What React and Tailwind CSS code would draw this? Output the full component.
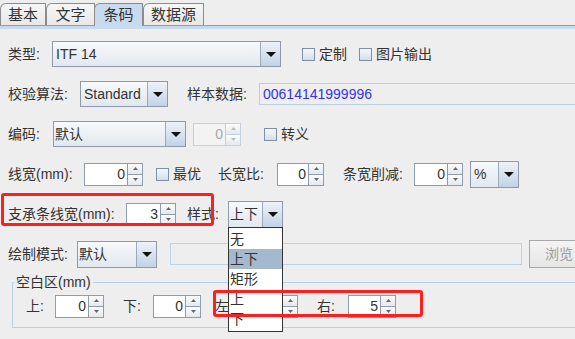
import React from "react";

const tabs = ["基本", "文字", "条码", "数据源"];
const styles = ["无", "上下", "矩形", "上", "下"];

function DownArrow() {
  return (
    <svg width="10" height="5" viewBox="0 0 10 5">
      <path d="M0 0h10L5 5z" fill="#111" />
    </svg>
  );
}

function Combo({ className, text, textClass = "pl-[3px]" }) {
  return (
    <div
      className={`flex h-[26px] shrink-0 border border-[#8d9aab] bg-linear-to-b from-[#f7f9fb] to-[#e2e8ef] ${className}`}
    >
      <div className={`flex flex-1 items-center text-[14px] text-[#333] ${textClass}`}>
        {text}
      </div>
      <div className="flex w-[20px] items-center justify-center border-l border-[#9aa9bb] bg-linear-to-b from-[#edf2f8] to-[#c3d2e4]">
        <DownArrow />
      </div>
    </div>
  );
}

function Spinner({ className, value, disabled }) {
  const line = disabled ? "border-[#c3d1df]" : "border-[#8f9cad]";
  return (
    <div className={`flex h-[23px] shrink-0 ${className}`}>
      <div
        className={`flex flex-1 items-center justify-end border pr-[2px] text-[14px] ${line} ${
          disabled ? "bg-[#f3f3f3] text-[#a8a8a8]" : "bg-white text-[#333]"
        }`}
      >
        {value}
      </div>
      <div className="flex w-[15px] flex-col">
        <div
          className={`flex flex-1 items-center justify-center border-y border-r ${line} bg-linear-to-b from-[#fbfcfd] to-[#e4e9ef]`}
        >
          <svg width="5" height="3" viewBox="0 0 5 3">
            <path d="M0 3L2.5 0 5 3z" fill={disabled ? "#bbb" : "#666"} />
          </svg>
        </div>
        <div
          className={`flex flex-1 items-center justify-center border-b border-r ${line} bg-linear-to-b from-[#fbfcfd] to-[#e4e9ef]`}
        >
          <svg width="5" height="3" viewBox="0 0 5 3">
            <path d="M0 0h5L2.5 3z" fill={disabled ? "#bbb" : "#666"} />
          </svg>
        </div>
      </div>
    </div>
  );
}

function Check({ label, className = "" }) {
  return (
    <div className={`flex shrink-0 items-center ${className}`}>
      <div className="h-[13px] w-[13px] border border-[#7f90a6] bg-linear-to-b from-[#f5f8fb] to-[#d2deeb]" />
      <span className="ml-[4px] text-[14px] text-[#333]">{label}</span>
    </div>
  );
}

function Label({ className, children }) {
  return <div className={`shrink-0 text-[14px] text-[#333] ${className}`}>{children}</div>;
}

export default function App() {
  return (
    <div className="relative h-[339px] w-[575px] overflow-hidden bg-[#eeeeee] font-['Liberation_Sans','Noto_Sans_CJK_SC',sans-serif] leading-[18px]">
      {/* Tabs */}
      <div className="flex h-[25px] items-end">
        {tabs.map((t, i) => (
          <div
            key={t}
            className={`flex shrink-0 items-center justify-center rounded-tl-[6px] border-t border-r border-l border-[#8c8c8c] text-[15px] text-[#333] ${
              i === 2
                ? "relative z-10 -mb-px h-[23px] bg-[#c8daee]"
                : "h-[22px] bg-linear-to-b from-[#f6f6f6] to-[#e8e8e8]"
            } ${i === 0 ? "w-[46px]" : i === 3 ? "w-[61px]" : "w-[49px]"} ${i === 2 ? "-ml-px" : ""}`}
          >
            {t}
          </div>
        ))}
      </div>
      <div className="h-[4px] border-t border-[#7f9ec6] bg-[#c8daee]" />

      <div className="pt-[5px]">
        {/* 类型 */}
        <div className="flex h-[40px] items-center pl-[8px]">
          <Label className="w-[44px]">类型:</Label>
          <Combo className="w-[229px]" text="ITF 14" />
          <Check label="定制" className="ml-[21px] w-[57px]" />
          <Check label="图片输出" />
        </div>

        {/* 校验算法 */}
        <div className="flex h-[40px] items-center pl-[8px]">
          <Label className="w-[72px]">校验算法:</Label>
          <Combo className="w-[88px]" text="Standard" />
          <Label className="ml-[19px] w-[72px]">样本数据:</Label>
          <div className="flex h-[22px] w-[330px] shrink-0 items-center border border-[#b8cfe6] pl-[3px] text-[14px] text-[#3434e8]">
            00614141999996
          </div>
        </div>

        {/* 编码 */}
        <div className="flex h-[40px] items-center pl-[8px]">
          <Label className="w-[45px]">编码:</Label>
          <Combo className="w-[133px]" text="默认" textClass="pl-[1px]" />
          <Spinner className="ml-[7px] w-[48px]" value="0" disabled />
          <Check label="转义" className="ml-[23px]" />
        </div>

        {/* 线宽 */}
        <div className="flex h-[40px] items-center pl-[8px]">
          <Label className="w-[76px]">线宽(mm):</Label>
          <Spinner className="w-[59px]" value="0" />
          <Check label="最优" className="ml-[13px] w-[62px]" />
          <Label className="w-[59px]">长宽比:</Label>
          <Spinner className="w-[47px]" value="0" />
          <Label className="ml-[19px] w-[71px]">条宽削减:</Label>
          <Spinner className="w-[49px]" value="0" />
          <Combo className="ml-[7px] w-[49px] h-[27px]" text="%" />
        </div>

        {/* 支承条线宽 */}
        <div className="flex h-[40px] items-center pl-[8px]">
          <Label className="w-[118px]">支承条线宽(mm):</Label>
          <Spinner className="w-[50px]" value="3" />
          <Label className="ml-[11px] w-[41px]">样式:</Label>
          <Combo className="w-[55px] h-[27px]" text="上下" textClass="pl-[1px]" />
        </div>

        {/* 绘制模式 */}
        <div className="flex h-[40px] items-center pl-[8px]">
          <Label className="w-[69px]">绘制模式:</Label>
          <Combo className="w-[80px] h-[27px]" text="默认" textClass="pl-[1px]" />
          <div className="ml-[13px] h-[22px] w-[352px] shrink-0 border border-[#bcd2e8]" />
          <div className="ml-[7px] flex h-[28px] w-[60px] shrink-0 items-center border border-[#a8a8a8] bg-linear-to-b from-[#f4f4f4] to-[#e6e6e6] pl-[15px] text-[14px] text-[#9c9c9c]">
            浏览
          </div>
        </div>

        {/* 空白区 */}
        <fieldset className="ml-[12px] w-[600px] border border-[#b8cfe5]">
          <legend className="ml-[1px] px-[2px] text-[14px] leading-[16px] text-[#333]">
            空白区(mm)
          </legend>
          <div className="mb-[5px] flex h-[32px] items-center pl-[13px]">
            <Label className="w-[29px]">上:</Label>
            <Spinner className="w-[49px]" value="0" />
            <Label className="ml-[19px] w-[30px]">下:</Label>
            <Spinner className="w-[48px]" value="0" />
            <Label className="ml-[14px] w-[30px]">左:</Label>
            <Spinner className="w-[53px]" value="0" />
            <Label className="ml-[19px] w-[31px]">右:</Label>
            <Spinner className="w-[48px]" value="5" />
          </div>
        </fieldset>
      </div>

      {/* 样式 popup list */}
      <div className="absolute top-[227px] left-[228px] h-[105px] w-[55px] overflow-hidden border border-[#333] bg-white pt-px">
        {styles.map((s, i) => (
          <div
            key={s}
            className={`h-[20px] pl-px text-[14px] leading-[20px] text-[#333] ${
              i === 1 ? "bg-[#a5b9ce]" : ""
            }`}
          >
            {s}
          </div>
        ))}
      </div>

      {/* annotations */}
      <div className="absolute top-[193px] left-[1px] h-[33px] w-[213px] rounded-[3px] border-[3px] border-[#ff1f1f]" />
      <div className="absolute top-[290px] left-[213px] h-[27px] w-[210px] rounded-[3px] border-[3px] border-[#ff1f1f]" />
    </div>
  );
}
